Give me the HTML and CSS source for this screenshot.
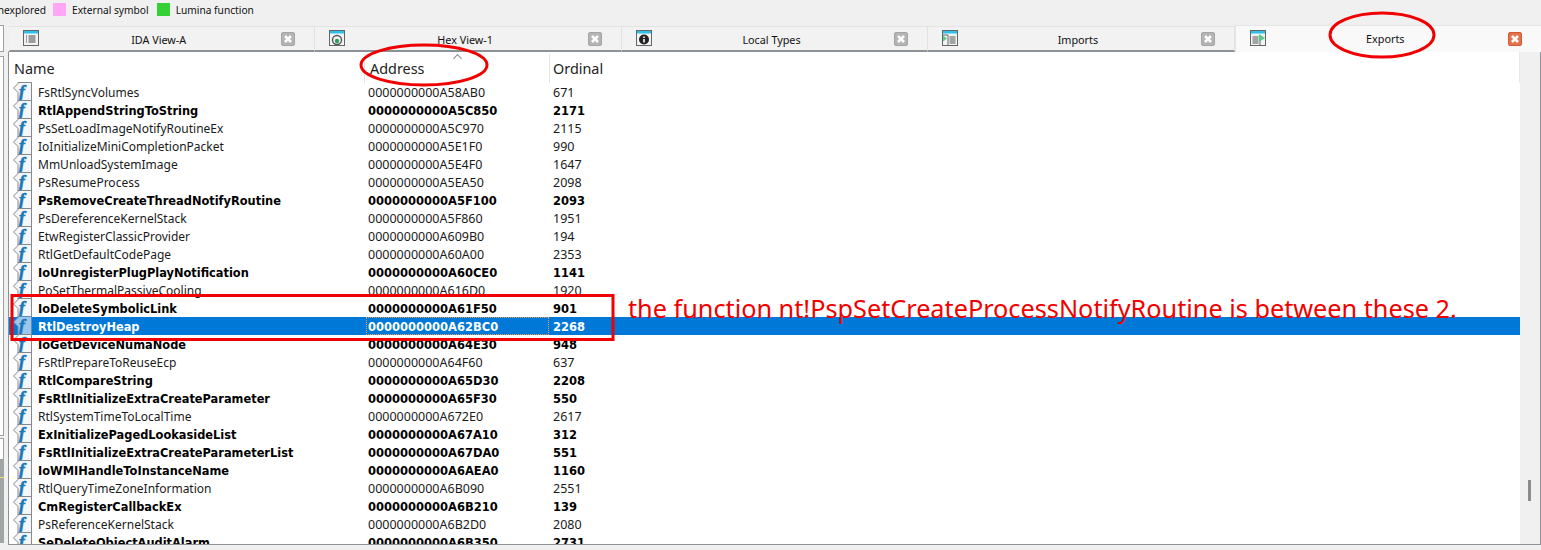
FILE: index.html
```html
<!DOCTYPE html>
<html>
<head>
    <meta charset="UTF-8">
    <title>Exports</title>
    <link rel="stylesheet" href="styles.css">
</head>
<body>
    <svg class="defs" width="0" height="0">
        <symbol id="fn" viewBox="0 0 20 20">
            <path d="M6 .5H19.5V19.5H6V10.5L1.5 6 6 1.5Z" class="fn-page"/>
            <text x="7" y="15" class="fn-letter">f</text>
        </symbol>
        <symbol id="x" viewBox="0 0 12 12">
            <path d="M3 3 9 9M9 3 3 9" stroke="#fff" stroke-width="2.6"/>
        </symbol>
    </svg>

    <div class="legend">
        <span class="cut">Unexplored</span>
        <i class="swatch pink"></i><span>External symbol</span>
        <i class="swatch green"></i><span>Lumina function</span>
    </div>

    <div class="main">
        <div class="side">
            <div class="side-box top"></div>
            <div class="side-box list"></div>
            <div class="side-box small"></div>
            <div class="side-grey"></div>
        </div>
        <div class="panel">
            <div class="tabs">
                <div class="tab">
                    <svg class="tab-icon" viewBox="0 0 16 16"><rect x=".5" y=".5" width="15" height="15" fill="#f2f4f4" stroke="#666"/><rect x="1" y="1" width="14" height="2.5" fill="#2cc0ea"/><path d="M3 6h1M3 8h1M3 10h1M3 12h1M5.5 6h7M5.5 8h7M5.5 10h7M5.5 12h7" stroke="#444"/></svg>
                    <span class="tab-name">IDA View-A</span>
                    <span class="close"><svg><use href="#x"/></svg></span>
                </div>
                <div class="tab">
                    <svg class="tab-icon" viewBox="0 0 16 16"><rect x=".5" y=".5" width="15" height="15" fill="#f2f4f4" stroke="#666"/><rect x="1" y="1" width="14" height="2.5" fill="#2cc0ea"/><circle cx="8" cy="10" r="4.5" fill="none" stroke="#555" stroke-width="1.4"/><circle cx="8" cy="11" r="2.2" fill="#2f9e58"/></svg>
                    <span class="tab-name">Hex View-1</span>
                    <span class="close"><svg><use href="#x"/></svg></span>
                </div>
                <div class="tab">
                    <svg class="tab-icon" viewBox="0 0 16 16"><rect x=".5" y=".5" width="15" height="15" fill="#f2f4f4" stroke="#666"/><rect x="1" y="1" width="14" height="2.5" fill="#2cc0ea"/><circle cx="8" cy="9.5" r="5" fill="#222"/><path d="M8 6.5v1.5M8 9v3.5" stroke="#fff" stroke-width="1.6"/></svg>
                    <span class="tab-name">Local Types</span>
                    <span class="close"><svg><use href="#x"/></svg></span>
                </div>
                <div class="tab">
                    <svg class="tab-icon" viewBox="0 0 16 16"><rect x=".5" y=".5" width="15" height="15" fill="#f2f4f4" stroke="#666"/><rect x="1" y="1" width="14" height="2.5" fill="#2cc0ea"/><path d="M1 5h5v10" fill="none" stroke="#666"/><path d="M1 5.5 5 8.5 1 11.5Z" fill="#5bc98c"/><path d="M7.5 7h6M7.5 9h6M7.5 11h6M7.5 13h6" stroke="#555"/></svg>
                    <span class="tab-name">Imports</span>
                    <span class="close"><svg><use href="#x"/></svg></span>
                </div>
                <div class="tab active">
                    <svg class="tab-icon" viewBox="0 0 16 16"><rect x=".5" y=".5" width="15" height="15" fill="#f2f4f4" stroke="#666"/><rect x="1" y="1" width="14" height="2.5" fill="#2cc0ea"/><path d="M10 5v10" stroke="#666"/><path d="M9 4 15 8 9 12Z" fill="#5bc98c"/><path d="M2.5 7h6M2.5 9h6M2.5 11h6M2.5 13h6" stroke="#555"/></svg>
                    <span class="tab-name">Exports</span>
                    <span class="close"><svg><use href="#x"/></svg></span>
                </div>
            </div>

            <div class="view">
                <div class="table">
                    <div class="head">
                        <span class="col-name">Name</span>
                        <span class="col-addr">Address<i class="sort"></i></span>
                        <span class="col-ord">Ordinal</span>
                    </div>
                    <div class="row"><svg class="fn"><use href="#fn"/></svg><span class="col-name">FsRtlSyncVolumes</span><span class="col-addr">0000000000A58AB0</span><span class="col-ord">671</span></div>
                    <div class="row bold"><svg class="fn"><use href="#fn"/></svg><span class="col-name">RtlAppendStringToString</span><span class="col-addr">0000000000A5C850</span><span class="col-ord">2171</span></div>
                    <div class="row"><svg class="fn"><use href="#fn"/></svg><span class="col-name">PsSetLoadImageNotifyRoutineEx</span><span class="col-addr">0000000000A5C970</span><span class="col-ord">2115</span></div>
                    <div class="row"><svg class="fn"><use href="#fn"/></svg><span class="col-name">IoInitializeMiniCompletionPacket</span><span class="col-addr">0000000000A5E1F0</span><span class="col-ord">990</span></div>
                    <div class="row"><svg class="fn"><use href="#fn"/></svg><span class="col-name">MmUnloadSystemImage</span><span class="col-addr">0000000000A5E4F0</span><span class="col-ord">1647</span></div>
                    <div class="row"><svg class="fn"><use href="#fn"/></svg><span class="col-name">PsResumeProcess</span><span class="col-addr">0000000000A5EA50</span><span class="col-ord">2098</span></div>
                    <div class="row bold"><svg class="fn"><use href="#fn"/></svg><span class="col-name">PsRemoveCreateThreadNotifyRoutine</span><span class="col-addr">0000000000A5F100</span><span class="col-ord">2093</span></div>
                    <div class="row"><svg class="fn"><use href="#fn"/></svg><span class="col-name">PsDereferenceKernelStack</span><span class="col-addr">0000000000A5F860</span><span class="col-ord">1951</span></div>
                    <div class="row"><svg class="fn"><use href="#fn"/></svg><span class="col-name">EtwRegisterClassicProvider</span><span class="col-addr">0000000000A609B0</span><span class="col-ord">194</span></div>
                    <div class="row"><svg class="fn"><use href="#fn"/></svg><span class="col-name">RtlGetDefaultCodePage</span><span class="col-addr">0000000000A60A00</span><span class="col-ord">2353</span></div>
                    <div class="row bold"><svg class="fn"><use href="#fn"/></svg><span class="col-name">IoUnregisterPlugPlayNotification</span><span class="col-addr">0000000000A60CE0</span><span class="col-ord">1141</span></div>
                    <div class="row"><svg class="fn"><use href="#fn"/></svg><span class="col-name">PoSetThermalPassiveCooling</span><span class="col-addr">0000000000A616D0</span><span class="col-ord">1920</span></div>
                    <div class="row bold"><svg class="fn"><use href="#fn"/></svg><span class="col-name">IoDeleteSymbolicLink</span><span class="col-addr">0000000000A61F50</span><span class="col-ord">901</span></div>
                    <div class="row bold selected"><svg class="fn"><use href="#fn"/></svg><span class="col-name">RtlDestroyHeap</span><span class="col-addr focus">0000000000A62BC0</span><span class="col-ord">2268</span></div>
                    <div class="row bold"><svg class="fn"><use href="#fn"/></svg><span class="col-name">IoGetDeviceNumaNode</span><span class="col-addr">0000000000A64E30</span><span class="col-ord">948</span></div>
                    <div class="row"><svg class="fn"><use href="#fn"/></svg><span class="col-name">FsRtlPrepareToReuseEcp</span><span class="col-addr">0000000000A64F60</span><span class="col-ord">637</span></div>
                    <div class="row bold"><svg class="fn"><use href="#fn"/></svg><span class="col-name">RtlCompareString</span><span class="col-addr">0000000000A65D30</span><span class="col-ord">2208</span></div>
                    <div class="row bold"><svg class="fn"><use href="#fn"/></svg><span class="col-name">FsRtlInitializeExtraCreateParameter</span><span class="col-addr">0000000000A65F30</span><span class="col-ord">550</span></div>
                    <div class="row"><svg class="fn"><use href="#fn"/></svg><span class="col-name">RtlSystemTimeToLocalTime</span><span class="col-addr">0000000000A672E0</span><span class="col-ord">2617</span></div>
                    <div class="row bold"><svg class="fn"><use href="#fn"/></svg><span class="col-name">ExInitializePagedLookasideList</span><span class="col-addr">0000000000A67A10</span><span class="col-ord">312</span></div>
                    <div class="row bold"><svg class="fn"><use href="#fn"/></svg><span class="col-name">FsRtlInitializeExtraCreateParameterList</span><span class="col-addr">0000000000A67DA0</span><span class="col-ord">551</span></div>
                    <div class="row bold"><svg class="fn"><use href="#fn"/></svg><span class="col-name">IoWMIHandleToInstanceName</span><span class="col-addr">0000000000A6AEA0</span><span class="col-ord">1160</span></div>
                    <div class="row"><svg class="fn"><use href="#fn"/></svg><span class="col-name">RtlQueryTimeZoneInformation</span><span class="col-addr">0000000000A6B090</span><span class="col-ord">2551</span></div>
                    <div class="row bold"><svg class="fn"><use href="#fn"/></svg><span class="col-name">CmRegisterCallbackEx</span><span class="col-addr">0000000000A6B210</span><span class="col-ord">139</span></div>
                    <div class="row"><svg class="fn"><use href="#fn"/></svg><span class="col-name">PsReferenceKernelStack</span><span class="col-addr">0000000000A6B2D0</span><span class="col-ord">2080</span></div>
                    <div class="row bold"><svg class="fn"><use href="#fn"/></svg><span class="col-name">SeDeleteObjectAuditAlarm</span><span class="col-addr">0000000000A6B350</span><span class="col-ord">2731</span></div>
                </div>
                <div class="scrollbar"><div class="thumb"></div></div>
            </div>
        </div>
    </div>

    <!-- red marks drawn over the screenshot -->
    <svg class="marks" width="1541" height="550">
        <ellipse cx="424" cy="65" rx="63" ry="20" />
        <ellipse cx="1382" cy="35" rx="52" ry="22" />
        <rect x="12" y="295.5" width="601" height="44" />
    </svg>
    <div class="note">the function nt!PspSetCreateProcessNotifyRoutine is between these 2.</div>
</body>
</html>
```

FILE: styles.css
```css
* {
    box-sizing: border-box;
}
body {
    margin: 0;
    height: 550px;
    overflow: hidden;
    background-color: #f0f0f0;
    color: #111;
    font-family: "Noto Sans", sans-serif;
    font-size: 10.8px;
    display: flex;
    flex-direction: column;
    position: relative;
}
.defs {
    position: absolute;
}
.legend {
    height: 25px;
    display: flex;
    align-items: flex-start;
    padding-top: 3px;
    font-size: 10.2px;
    line-height: 14px;
    white-space: nowrap;
}
.cut {
    margin-left: -14px;
    width: 60px;
    text-align: right;
}
.swatch {
    width: 13px;
    height: 13px;
    margin: 0 6px 0 7px;
}
.swatch.pink {
    background-color: #ffa6f5;
}
.swatch.green {
    background-color: #33d133;
    margin-left: 8px;
}
.main {
    flex: 1;
    display: flex;
    padding-bottom: 5px;
    min-height: 0;
}
.side {
    width: 8px;
    flex: none;
    padding-right: 4px;
    display: flex;
    flex-direction: column;
}
.side-box {
    background-color: #fff;
    border: 1px solid #a0a0a0;
    border-left: 0;
}
.side-box.top {
    height: 27px;
}
.side-box.list {
    height: 380px;
    margin-top: 4px;
}
.side-box.small {
    height: 22px;
    margin-top: 2px;
}
.side-grey {
    flex: 1;
    margin-bottom: 2px;
    background: linear-gradient(#a0a6a6 17px, #f0e060 17px, #f0e060 18px, #a0a6a6 18px);
}
.panel {
    flex: 1;
    display: flex;
    flex-direction: column;
    min-width: 0;
}
.tabs {
    height: 27px;
    display: flex;
    align-items: stretch;
}
.tab {
    flex: 1;
    display: flex;
    align-items: center;
    padding: 0 19px 0 14px;
    margin-top: 1px;
    background-color: #f2f2f2;
    border-top: 1px solid #e4e4e4;
    border-right: 1px solid #e2e2e2;
    border-bottom: 2px solid #8c9196;
}
.tab:first-child {
    padding-left: 13px;
    border-left: 2px solid #f0f0f0;
}
.tab.active {
    margin-top: 0;
    background-color: #f9f9f9;
    border: 1px solid #e6e6e6;
    border-bottom: 0;
    border-right: 0;
}
.tab-icon {
    width: 16px;
    height: 16px;
    flex: none;
    margin-top: -2px;
}
.tab-name {
    flex: 1;
    padding: 2px 3px 0 0;
    text-align: center;
}
.tab.active .tab-name {
    padding: 0 3px 2px 0;
}
.close {
    width: 14px;
    height: 14px;
    flex: none;
    display: flex;
    background-color: #b4b4b4;
    border: 1px solid #a4a4a4;
    border-radius: 2px;
}
.close svg {
    width: 12px;
    height: 12px;
}
.tab.active .close {
    background-color: #e2744a;
    border-color: #d2583a;
}
.view {
    flex: 1;
    display: flex;
    min-height: 0;
    background-color: #fff;
    border: 1px solid #8c9196;
    border-top: 0;
    overflow: hidden;
}
.table {
    flex: 1;
    min-width: 0;
    overflow: hidden;
}
.head {
    height: 31px;
    display: flex;
    align-items: center;
    font-size: 14.4px;
    color: #222;
    padding-top: 1px;
    padding-left: 5px;
    border-right: 1px solid #e8e8e8;
}
.head .col-name {
    width: 351px;
    border-right: 1px solid #e4e4e4;
    line-height: 29px;
}
.head .col-addr {
    width: 185px;
    padding-left: 5px;
    border-right: 1px solid #e4e4e4;
    line-height: 29px;
    position: relative;
}
.head .col-ord {
    padding-left: 3px;
}
.sort {
    position: absolute;
    left: 89px;
    top: 1px;
    width: 7px;
    height: 7px;
    border-left: 1px solid #888;
    border-top: 1px solid #888;
    transform: rotate(45deg) scale(.9);
}
.row {
    --fn-bg: #f4f6f8;
    --fn-line: #85898c;
    height: 18px;
    display: flex;
    align-items: flex-start;
    white-space: nowrap;
    line-height: 20px;
    font-size: 12.5px;
    color: #1a1a1a;
}
.row .col-name {
    width: 328px;
    font-size: 12px;
}
.row.bold {
    font-family: "DejaVu Sans", sans-serif;
    font-size: 11.5px;
    font-weight: bold;
    color: #000;
}
.row.bold .col-name {
    font-size: 11.4px;
}
.row.selected {
    --fn-bg: #9cc6ea;
    --fn-line: #5c8cb8;
    background-color: #0078d7;
    color: #fff;
}
.fn {
    width: 20px;
    height: 20px;
    flex: none;
    margin: -1px 6px -1px 3px;
}
.fn-page {
    fill: var(--fn-bg);
    stroke: var(--fn-line);
}
.fn-letter {
    font-family: "Liberation Serif", serif;
    font-style: italic;
    font-weight: bold;
    font-size: 17.5px;
    fill: #1a76b8;
    stroke: #1a76b8;
    stroke-width: .6;
}
.row .col-addr {
    width: 183px;
    height: 18px;
    padding-left: 2px;
}
.row .col-ord {
    padding-left: 4px;
}
.focus {
    outline: 1px dotted #e8a050;
    outline-offset: -1px;
}
.scrollbar {
    width: 20px;
    flex: none;
    background-color: #f0f0f0;
    position: relative;
}
.thumb {
    position: absolute;
    left: 8px;
    top: 428px;
    width: 3px;
    height: 21px;
    background-color: #8c8c8c;
}
.marks {
    position: absolute;
    left: 0;
    top: 0;
    pointer-events: none;
}
.marks ellipse, .marks rect {
    fill: none;
    stroke: #f00000;
    stroke-width: 3;
}
.note {
    position: absolute;
    left: 628px;
    top: 293px;
    color: #f00000;
    font-size: 25.25px;
    line-height: 30px;
    white-space: nowrap;
}
```
